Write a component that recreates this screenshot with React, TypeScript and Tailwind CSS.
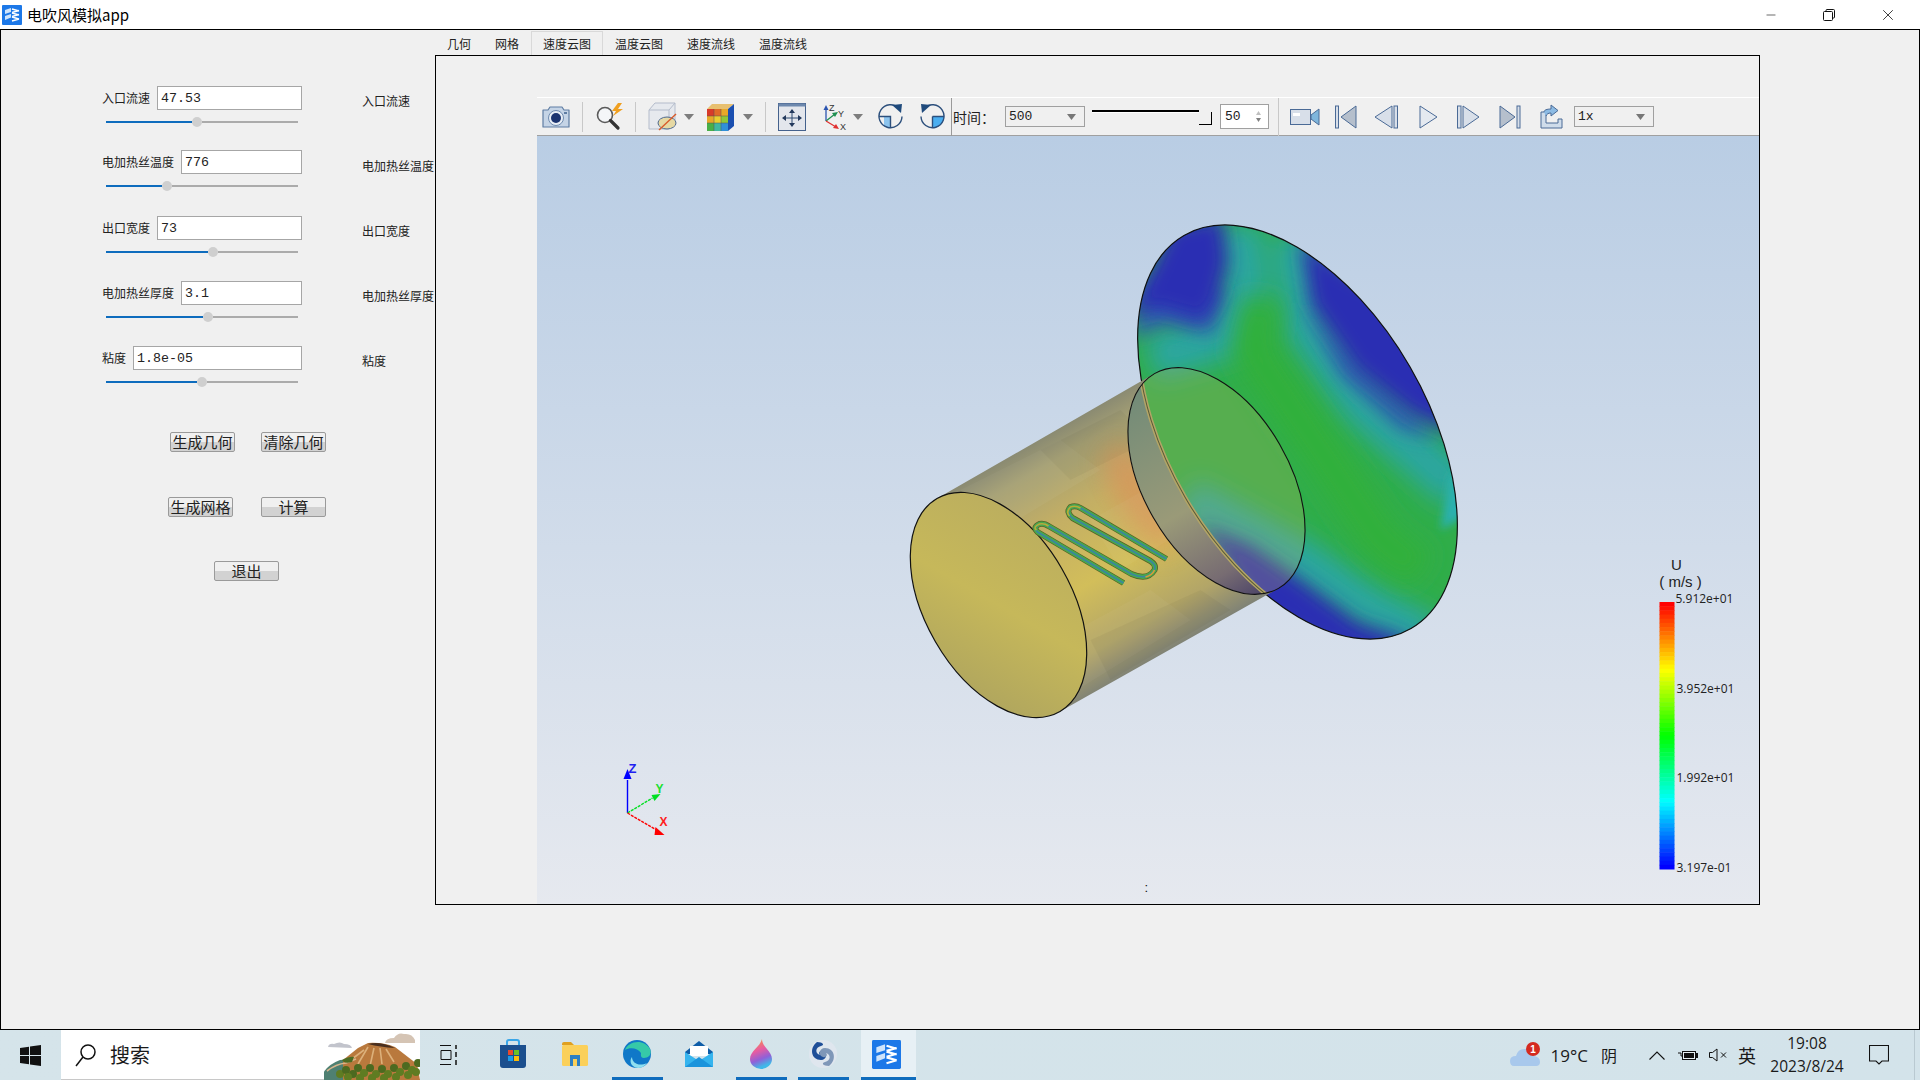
import { X, Minus } from "lucide-react";
import type { ReactNode } from "react";

const rows = [
  { label: "入口流速", value: "47.53", inputW: "w-[145px]", pct: 44.8, top: "mt-[56px]" },
  { label: "电加热丝温度", value: "776", inputW: "w-[121px]", pct: 29.2, top: "mt-[20px]" },
  { label: "出口宽度", value: "73", inputW: "w-[145px]", pct: 53.1, top: "mt-[22px]" },
  { label: "电加热丝厚度", value: "3.1", inputW: "w-[121px]", pct: 50.5, top: "mt-[21px]" },
  { label: "粘度", value: "1.8e-05", inputW: "w-[169px]", pct: 47.4, top: "mt-[21px]" },
];

const sideLabels = ["入口流速", "电加热丝温度", "出口宽度", "电加热丝厚度", "粘度"];
const tabs = ["几何", "网格", "速度云图", "温度云图", "速度流线", "温度流线"];

const wirePath =
  "M1123 583 L1037 532 Q1032 527 1039 524 Q1044 523 1048 526 L1131 574 Q1147 581 1154 570 Q1156 565 1150 561 L1072 518 Q1065 512 1070 507 Q1075 505 1080 508 L1166 559";

function AppLogo({ size }: { size: number }) {
  return (
    <svg width={size} height={size} viewBox="0 0 20 20" className="shrink-0">
      <rect width="20" height="20" rx="1" fill="#1c78e8" />
      <path d="M3 5 L9 3 V7 L3 9Z M3 11 L9 9 V12.5 L3 15Z" fill="#cfe4fb" />
      <path d="M10 4 L17 6 M10 7.5 L17 5.5 M10 8 L17 10 M10 11.5 L17 9.5 M10 12 L17 14 M10 16 L17 14" stroke="#fff" strokeWidth="1.5" />
    </svg>
  );
}

function Slider({ pct }: { pct: number }) {
  return (
    <div className="mt-[4px] ml-[4px] flex h-[16px] w-[192px] items-center">
      <div className="h-[2px] bg-[#0e6cbd]" style={{ width: `${pct}%` }} />
      <div className="h-[10px] w-[10px] shrink-0 rounded-full bg-[#cfcfcf]" />
      <div className="h-[2px] flex-1 bg-[#ababab]" />
    </div>
  );
}

function QtButton({ text }: { text: string }) {
  return (
    <div className="flex h-[20px] w-[65px] items-center justify-center rounded-[2px] border border-[#9a9a9a] bg-gradient-to-b from-[#f0f0f0] from-50% to-[#d2d2d2] to-50% pb-[2px] text-[15px] leading-none text-[#222]">
      {text}
    </div>
  );
}

function DropArrow() {
  return (
    <svg width="10" height="6" viewBox="0 0 10 6" className="shrink-0">
      <path d="M0 0H10L5 6Z" fill="#7d7d7d" />
    </svg>
  );
}

function Sep({ ml }: { ml: string }) {
  return <div className={`h-[30px] w-px shrink-0 bg-[#c8c8c8] ${ml}`} />;
}

function Combo({ text, ml }: { text: string; ml: string }) {
  return (
    <div className={`flex h-[21px] w-[80px] shrink-0 items-center justify-between border border-[#a0a0a0] pl-[3px] pr-[8px] font-['Liberation_Mono',monospace] text-[13px] text-[#222] ${ml}`}>
      <span>{text}</span>
      <svg width="9" height="6" viewBox="0 0 9 6">
        <path d="M0 0H9L4.5 6Z" fill="#777" />
      </svg>
    </div>
  );
}

function Toolbar() {
  const navy = "#4a6a96";
  const pale = "#d8dfe9";
  return (
    <div className="flex h-[39px] shrink-0 items-center border-t border-b border-t-white border-b-[#a0a0a0] bg-[#f0f0f0]">
      {/* camera */}
      <svg width="28" height="25" viewBox="0 0 28 25" className="ml-[5px] shrink-0">
        <path d="M1 6 H6 L8 3 H20 L22 6 H27 V23 H1Z" fill="#c5d4e6" stroke="#5f7da3" strokeWidth="1.2" strokeLinejoin="round" />
        <circle cx="14" cy="14" r="7.5" fill="#e8eef5" stroke="#6f8bb0" />
        <circle cx="14" cy="14" r="5" fill="#1b3470" />
        <rect x="22" y="8" width="3" height="2" fill="#5f7da3" />
      </svg>
      <Sep ml="ml-[12px]" />
      {/* magnifier with bolt */}
      <svg width="29" height="29" viewBox="0 0 29 29" className="ml-[12px] shrink-0">
        <circle cx="10" cy="13" r="7.5" fill="#f4f6f8" stroke="#5a5a5a" strokeWidth="1.6" />
        <path d="M15.5 18.5 L23 26" stroke="#333" strokeWidth="3.2" strokeLinecap="round" />
        <path d="M23 1 L17 9 H21 L18 14 L28 7 H23 L27 1Z" fill="#f0a020" />
      </svg>
      <Sep ml="ml-[11px]" />
      {/* box with clip */}
      <svg width="29" height="29" viewBox="0 0 29 29" className="ml-[12px] shrink-0">
        <path d="M1 8 L7 1 H27 V20 L21 27 H1Z" fill="#e6e9ee" stroke="#b4bccb" />
        <path d="M1 8 H21 V27 M21 8 L27 1" fill="none" stroke="#b4bccb" />
        <ellipse cx="19" cy="21" rx="9" ry="6" fill="#e6d9a4" stroke="#4f6a90" />
        <path d="M11 28 L28 12" stroke="#d85a2a" strokeWidth="1.4" />
      </svg>
      <div className="ml-[7px]"><DropArrow /></div>
      {/* colour cube */}
      <svg width="27" height="28" viewBox="0 0 27 28" className="ml-[13px] shrink-0">
        <path d="M5 1 H27 L21 6 H0Z" fill="#e8c070" />
        <path d="M21 6 L27 1 V23 L21 28Z" fill="#1b4fb0" />
        <rect x="0" y="6" width="7" height="7" fill="#d83a2a" />
        <rect x="7" y="6" width="7" height="7" fill="#e06a28" />
        <rect x="14" y="6" width="7" height="7" fill="#e8a828" />
        <rect x="0" y="13" width="7" height="7" fill="#e8a828" />
        <rect x="7" y="13" width="7" height="7" fill="#e8d030" />
        <rect x="14" y="13" width="7" height="7" fill="#90c838" />
        <rect x="0" y="20" width="7" height="8" fill="#48b048" />
        <rect x="7" y="20" width="7" height="8" fill="#40b8a0" />
        <rect x="14" y="20" width="7" height="8" fill="#3090d8" />
        <path d="M7 6 V28 M14 6 V28 M0 13 H21 M0 20 H21" stroke="#555" strokeWidth="0.5" />
      </svg>
      <div className="ml-[9px]"><DropArrow /></div>
      <Sep ml="ml-[12px]" />
      {/* fit view */}
      <svg width="28" height="28" viewBox="0 0 28 28" className="ml-[12px] shrink-0">
        <rect x="0.5" y="0.5" width="27" height="27" fill="#e3e6ec" stroke="#44618c" />
        <rect x="0.5" y="0.5" width="27" height="3" fill="#6d88ad" />
        <path d="M14 7 V22 M6 15 H22" stroke="#2f4a70" />
        <path d="M14 6 L11 10 H17Z M14 24 L11 20 H17Z M4 15 L8 12 V18Z M24 15 L20 12 V18Z" fill="#23395c" />
      </svg>
      {/* axes */}
      <svg width="24" height="28" viewBox="0 0 24 28" className="ml-[17px] shrink-0">
        <path d="M3 18 V5" stroke="#2c55b0" strokeWidth="1.3" />
        <path d="M3 2 L0.5 7 H5.5Z" fill="#2c55b0" />
        <path d="M3 18 L12 11" stroke="#1f9050" strokeWidth="1.3" />
        <path d="M15 9 L9 10 L12 14Z" fill="#1f9050" />
        <path d="M3 18 L13 24" stroke="#e03030" strokeWidth="1.3" />
        <path d="M16 26 L10 25 L13 21Z" fill="#e03030" />
        <text x="6" y="8" fontSize="9" fontFamily="Liberation Sans" fill="#333">Z</text>
        <text x="15" y="14" fontSize="9" fontFamily="Liberation Sans" fill="#333">Y</text>
        <text x="17" y="27" fontSize="9" fontFamily="Liberation Sans" fill="#333">X</text>
      </svg>
      <div className="ml-[6px]"><DropArrow /></div>
      {/* rotate cw */}
      <svg width="25" height="25" viewBox="0 0 25 25" className="ml-[15px] shrink-0">
        <path d="M12.5 12.5 V24 A11.5 11.5 0 0 1 6 22 L6 12.5Z" fill="#8cc4ee" />
        <path d="M21 4.5 A11.5 11.5 0 1 0 24 12.5 M1 12.5 H12.5 V24" fill="none" stroke="#2c4f7c" strokeWidth="1.4" />
        <path d="M14 1 L24 0 L23 9Z" fill="#1f4a7c" />
      </svg>
      {/* rotate ccw */}
      <svg width="25" height="25" viewBox="0 0 25 25" className="ml-[17px] shrink-0">
        <path d="M12.5 12.5 H24 A11.5 11.5 0 0 1 12.5 24Z" fill="#4aaef0" />
        <path d="M4 4.5 A11.5 11.5 0 1 1 1 12.5 M12.5 12.5 H24 M12.5 12.5 V24" fill="none" stroke="#2c4f7c" strokeWidth="1.4" />
        <path d="M11 1 L1 0 L2 9Z" fill="#1f4a7c" />
      </svg>
      <div className="ml-[6px] h-[38px] w-px shrink-0 bg-[#9a9a9a]" />
      <span className="w-[53px] shrink-0 pl-[1px] text-[14px] leading-none text-[#222]">时间：</span>
      <Combo text="500" ml="" />
      {/* time slider */}
      <div className="ml-[7px] flex h-[18px] w-[120px] shrink-0 items-start">
        <div className="mt-[2px] h-[3px] flex-1 border-t-2 border-b border-t-black border-b-white" />
        <div className="mt-[4px] h-[13px] w-[13px] border-r border-b border-black bg-[#f0f0f0]" />
      </div>
      {/* spin box */}
      <div className="ml-[8px] flex h-[25px] w-[49px] shrink-0 items-center justify-between border border-[#a0a0a0] bg-white pl-[4px] pr-[6px] font-['Liberation_Mono',monospace] text-[13px] text-[#222]">
        <span>50</span>
        <svg width="7" height="13" viewBox="0 0 7 13">
          <path d="M3.5 1 L6 5 H1Z" fill="#c0c0c0" />
          <path d="M3.5 12 L6 8 H1Z" fill="#808080" />
        </svg>
      </div>
      <div className="ml-[9px] h-[38px] w-px shrink-0 bg-[#c8c8c8]" />
      {/* video */}
      <svg width="30" height="20" viewBox="0 0 30 20" className="ml-[11px] shrink-0">
        <rect x="0.5" y="2.5" width="20" height="15" fill={pale} stroke={navy} />
        <rect x="3" y="6" width="7" height="3" fill="#fff" />
        <path d="M21 8 L29 2 V18 L21 12Z" fill="#7fb6dc" stroke={navy} />
      </svg>
      {/* first */}
      <svg width="22" height="24" viewBox="0 0 22 24" className="ml-[15px] shrink-0">
        <rect x="0.5" y="1" width="3" height="22" fill={pale} stroke={navy} />
        <path d="M21 1 V23 L6 12Z" fill="#b5bfcc" stroke={navy} />
      </svg>
      {/* prev */}
      <svg width="24" height="24" viewBox="0 0 24 24" className="ml-[17px] shrink-0">
        <path d="M18 1 V23 L1 12Z" fill={pale} stroke={navy} />
        <rect x="20" y="1" width="3.5" height="22" fill={pale} stroke={navy} />
      </svg>
      {/* play */}
      <svg width="19" height="24" viewBox="0 0 19 24" className="ml-[21px] shrink-0">
        <path d="M1 1 V23 L18 12Z" fill="#e4e9f0" stroke={navy} />
      </svg>
      {/* next */}
      <svg width="23" height="24" viewBox="0 0 23 24" className="ml-[19px] shrink-0">
        <rect x="0.5" y="1" width="3.5" height="22" fill={pale} stroke={navy} />
        <path d="M6 1 V23 L22 12Z" fill={pale} stroke={navy} />
      </svg>
      {/* last */}
      <svg width="22" height="24" viewBox="0 0 22 24" className="ml-[19px] shrink-0">
        <path d="M1 1 V23 L16 12Z" fill="#b5bfcc" stroke={navy} />
        <rect x="18" y="1" width="3" height="22" fill={pale} stroke={navy} />
      </svg>
      {/* export */}
      <svg width="23" height="25" viewBox="0 0 23 25" className="ml-[19px] shrink-0">
        <path d="M1 8 H6 V19 H18 V15 H22 V24 H1Z" fill="#cfdcea" stroke={navy} />
        <path d="M4 8 C4 6 7 5 11 5 V1 L18 6.5 L11 12 V9 C8 9 7 10 6 12" fill="#8cbbe4" stroke={navy} />
      </svg>
      <Combo text="1x" ml="ml-[11px]" />
    </div>
  );
}

function Scene() {
  const flange = { cx: 1297, cy: 432, rx: 227, ry: 130 };
  const bands = Array.from({ length: 64 }, (_, i) => i);
  return (
    <svg viewBox="537 136 1221 768" className="h-full w-full">
      <defs>
        <clipPath id="flangeClip">
          <ellipse cx={flange.cx} cy={flange.cy} rx={flange.rx} ry={flange.ry} transform="rotate(60 1297 432)" />
        </clipPath>
        <clipPath id="rearClip">
          <ellipse cx="1216" cy="481" rx="124" ry="73" transform="rotate(60 1216 481)" />
        </clipPath>
        <clipPath id="bodyClip">
          <path d="M936.5 498.5 L1154 373.6 A124 73 60 0 0 1278 588.4 L1059.5 711.5Z" />
        </clipPath>
        <mask id="crescent" maskUnits="userSpaceOnUse" x="1050" y="300" width="300" height="350">
          <ellipse cx="1216" cy="481" rx="124" ry="73" transform="rotate(60 1216 481)" fill="#fff" />
          <ellipse cx={flange.cx} cy={flange.cy} rx={flange.rx} ry={flange.ry} transform="rotate(60 1297 432)" fill="#000" />
        </mask>
        <filter id="b6" x="-40%" y="-40%" width="180%" height="180%"><feGaussianBlur stdDeviation="9" /></filter>
        <filter id="b12" x="-40%" y="-40%" width="180%" height="180%"><feGaussianBlur stdDeviation="12" /></filter>
        <filter id="b3" x="-20%" y="-20%" width="140%" height="140%"><feGaussianBlur stdDeviation="4" /></filter>
        <linearGradient id="bodyGrad" gradientUnits="userSpaceOnUse" x1="1154" y1="374" x2="1278" y2="588">
          <stop offset="0" stopColor="#8b8b72" />
          <stop offset="0.1" stopColor="#a5a074" />
          <stop offset="0.32" stopColor="#c4af64" />
          <stop offset="0.6" stopColor="#d2be5a" />
          <stop offset="0.85" stopColor="#b2a568" />
          <stop offset="1" stopColor="#7f8276" />
        </linearGradient>
        <linearGradient id="capGrad" gradientUnits="userSpaceOnUse" x1="936" y1="498" x2="1060" y2="712">
          <stop offset="0" stopColor="#b8ab60" />
          <stop offset="0.5" stopColor="#c6b85a" />
          <stop offset="1" stopColor="#a9a05f" />
        </linearGradient>
        <linearGradient id="ringGrad" gradientUnits="userSpaceOnUse" x1="1140" y1="380" x2="1262" y2="595">
          <stop offset="0" stopColor="#6f8a78" />
          <stop offset="0.55" stopColor="#9a9a78" />
          <stop offset="0.85" stopColor="#776c72" />
          <stop offset="1" stopColor="#4c4468" />
        </linearGradient>
      </defs>

      {/* flange face */}
      <g clipPath="url(#flangeClip)">
        <rect x="1050" y="200" width="440" height="470" fill="#30ad4a" />
        <g filter="url(#b12)" fill="none" stroke="#2aa6a0" strokeWidth="46">
          <path d="M1236 226 L1244 280 L1228 335 L1150 358" />
          <path d="M1295 235 L1305 325 L1362 405 L1460 490" />
          <path d="M1185 500 L1300 562 L1360 604 L1430 640" />
        </g>
        <path d="M1262 300 L1252 350 L1320 450 L1380 540 L1420 570" fill="none" stroke="#32b03a" strokeWidth="40" filter="url(#b12)" />
        <path d="M1450 470 L1475 510 L1440 530Z" fill="#2ab0ae" filter="url(#b3)" />
        <g filter="url(#b6)" fill="#2f62ae">
          <path d="M1130 340 L1150 280 L1225 290 L1212 335 L1165 325Z" />
          <path d="M1300 300 L1350 360 L1440 440 L1400 430 L1340 375Z" />
        </g>
        <g filter="url(#b6)" fill="#2b2fb3">
          <path d="M1125 320 L1170 225 L1222 215 L1228 262 L1218 298 L1204 322 L1156 308Z" />
          <path d="M1300 240 L1390 295 L1485 445 L1412 416 L1354 370 L1310 305Z" />
          <path d="M1263 620 L1200 525 L1250 545 L1301 580 L1358 622 L1412 640 L1370 665Z" />
        </g>
        <ellipse cx="1216" cy="481" rx="124" ry="73" transform="rotate(60 1216 481)" fill="#c8b560" opacity="0.25" />
      </g>
      <ellipse cx={flange.cx} cy={flange.cy} rx={flange.rx} ry={flange.ry} transform="rotate(60 1297 432)" fill="none" stroke="#111" strokeWidth="1.2" />

      {/* cylinder wall */}
      <path d="M936.5 498.5 L1154 373.6 A124 73 60 0 0 1278 588.4 L1059.5 711.5Z" fill="url(#bodyGrad)" />
      <g clipPath="url(#bodyClip)">
        <ellipse cx="1140" cy="498" rx="22" ry="60" transform="rotate(-30 1140 498)" fill="#d9935a" opacity="0.7" filter="url(#b12)" />
        <g fill="#fff" opacity="0.035">
          <path d="M960 490 L1060 440 L1100 470 L1000 530Z" />
          <path d="M1090 520 L1180 470 L1200 520 L1120 570Z" />
          <path d="M1020 660 L1150 590 L1190 620 L1060 700Z" />
        </g>
        <g fill="#000" opacity="0.035">
          <path d="M1040 450 L1120 410 L1150 440 L1070 480Z" />
          <path d="M1090 640 L1200 590 L1230 610 L1110 680Z" />
        </g>
      </g>

      {/* neck ring seen through the wall */}
      <rect x="1050" y="300" width="300" height="350" fill="url(#ringGrad)" mask="url(#crescent)" />
      <g clipPath="url(#rearClip)">
        <ellipse cx={flange.cx} cy={flange.cy} rx={flange.rx} ry={flange.ry} transform="rotate(60 1297 432)" fill="none" stroke="#b3a566" strokeWidth="4" />
        <ellipse cx={flange.cx} cy={flange.cy} rx={flange.rx} ry={flange.ry} transform="rotate(60 1297 432)" fill="none" stroke="#5a5a38" strokeWidth="1" />
      </g>
      <ellipse cx="1216" cy="481" rx="124" ry="73" transform="rotate(60 1216 481)" fill="none" stroke="#111" strokeWidth="1.1" />

      {/* inlet cap */}
      <ellipse cx="998" cy="605" rx="123" ry="73" transform="rotate(60 998 605)" fill="url(#capGrad)" stroke="#111" strokeWidth="1.2" />

      {/* heater wire */}
      <g fill="none" strokeLinejoin="round">
        <path d={wirePath} stroke="#56622a" strokeWidth="6" />
        <path d={wirePath} stroke="#4aa84c" strokeWidth="4.4" />
        <path d={wirePath} stroke="#3a86a0" strokeWidth="1.6" />
        <path d="M1036 530 Q1032 527 1039 524 Q1044 523 1048 526" stroke="#b8b030" strokeWidth="1.6" />
        <path d="M1145 577 Q1152 575 1154 570" stroke="#d8a030" strokeWidth="1.6" />
        <path d="M1069 516 Q1065 512 1070 507 Q1075 505 1080 508" stroke="#b8b030" strokeWidth="1.6" />
      </g>

      {/* axes triad */}
      <g>
        <path d="M627 813 V780" stroke="#0000ff" strokeWidth="1.4" />
        <path d="M627 769 L623 779 H631Z" fill="#0000ff" />
        <path d="M627 813 L652 798" stroke="#00e020" strokeWidth="1.4" strokeDasharray="3 1" />
        <path d="M660 794 L651 795 L654 801Z" fill="#00e020" />
        <path d="M627 813 L656 830" stroke="#ff0000" strokeWidth="1.4" strokeDasharray="3 1" />
        <path d="M664 835 L655 827 L654 835Z" fill="#ff0000" />
        <text x="628" y="773" fontSize="13" fontWeight="700" fontFamily="Liberation Sans" fill="#2020f0">Z</text>
        <text x="655" y="793" fontSize="12" fontWeight="700" fontFamily="Liberation Sans" fill="#20e030">Y</text>
        <text x="659" y="826" fontSize="12" fontWeight="700" fontFamily="Liberation Sans" fill="#ff2020">X</text>
      </g>

      {/* colour legend */}
      {bands.map((i) => (
        <rect key={i} x="1659" y={602 + (i * 267) / 64} width="15" height={267 / 64 + 0.5} fill={`hsl(${(i / 63) * 240} 100% 50%)`} />
      ))}
      <g fontFamily="Liberation Sans" fill="#222">
        <text x="1676" y="570" fontSize="15" textAnchor="middle">U</text>
        <text x="1680" y="587" fontSize="15" textAnchor="middle">( m/s )</text>
      </g>
      <g fontFamily="Open Sans" fill="#222">
        <text x="1675" y="603" fontSize="12">5.912e+01</text>
        <text x="1676" y="693" fontSize="12">3.952e+01</text>
        <text x="1676" y="782" fontSize="12">1.992e+01</text>
        <text x="1676" y="872" fontSize="12">3.197e-01</text>
      </g>
      <text x="1144" y="892" fontSize="13" fontFamily="Liberation Sans" fill="#111">:</text>
    </svg>
  );
}

function TaskCell({ running, children }: { running?: boolean; children: ReactNode }) {
  return (
    <div className="flex h-full w-[62px] shrink-0 flex-col items-center">
      <div className="flex flex-1 items-center justify-center">{children}</div>
      <div className={running ? "h-[3px] w-[51px] bg-[#0f6cbd]" : "h-[3px] w-[51px]"} />
    </div>
  );
}

function TaskIcons() {
  return (
    <>
      {/* task view */}
      <svg width="18" height="22" viewBox="0 0 18 22" className="ml-[20px] mr-[24px] shrink-0" fill="none" stroke="#111">
        <path d="M0 1.5 H11 M0 20.5 H11 M1 6.5 H11 V15.5 H1Z" />
        <path d="M16 1 V5 M16 8 V13 M16 16 V21" strokeWidth="1.5" />
      </svg>
      <TaskCell>
        {/* store */}
        <svg width="30" height="30" viewBox="0 0 30 30">
          <path d="M9 6 V3 Q9 1 11 1 H19 Q21 1 21 3 V6" fill="none" stroke="#3aa6e8" strokeWidth="2" />
          <path d="M2 6 H28 V26 Q28 29 25 29 H5 Q2 29 2 26Z" fill="#1b4f8e" />
          <rect x="10" y="11" width="5" height="5" fill="#e8492c" />
          <rect x="16" y="11" width="5" height="5" fill="#6cc024" />
          <rect x="10" y="17" width="5" height="5" fill="#1c9be8" />
          <rect x="16" y="17" width="5" height="5" fill="#fbbc09" />
        </svg>
      </TaskCell>
      <TaskCell>
        {/* folder */}
        <svg width="28" height="26" viewBox="0 0 28 26">
          <path d="M1 3 Q1 1 3 1 H10 L13 4 H1Z" fill="#e0a020" />
          <rect x="1" y="4" width="26" height="21" rx="1.5" fill="#fbd05a" />
          <path d="M9 25 V14 H19 V25 H16 V18 H12 V25Z" fill="#2d7fc4" />
        </svg>
      </TaskCell>
      <TaskCell running>
        {/* edge */}
        <svg width="30" height="30" viewBox="0 0 30 30">
          <circle cx="15" cy="15" r="14" fill="#1078c8" />
          <path d="M3 11 C6 2 22 -1 28 10 C30 15 27 19 22 19 C18 19 19 15 19 14 C16 9 8 8 3 11Z" fill="#36c9a8" />
          <path d="M10 18 C10 24 17 28 25 24 C21 30 14 30 11 27 C8 25 8 20 10 18Z" fill="#8fe0f0" />
        </svg>
      </TaskCell>
      <TaskCell>
        {/* mail */}
        <svg width="30" height="28" viewBox="0 0 30 28">
          <path d="M1 12 L15 1 L29 12 V14 H1Z" fill="#0e5da8" />
          <path d="M6 6 H24 V16 H6Z" fill="#fff" />
          <path d="M1 12 L15 21 L29 12 V27 H1Z" fill="#35b4ee" />
          <path d="M1 27 L15 17 L29 27Z" fill="#1b94dc" />
        </svg>
      </TaskCell>
      <TaskCell running>
        {/* paint drop */}
        <svg width="24" height="30" viewBox="0 0 24 30">
          <defs>
            <linearGradient id="dropG" x1="0" y1="0" x2="0.3" y2="1">
              <stop offset="0" stopColor="#f8a030" />
              <stop offset="0.45" stopColor="#e85ca0" />
              <stop offset="0.75" stopColor="#9060d8" />
              <stop offset="1" stopColor="#40b8e8" />
            </linearGradient>
          </defs>
          <path d="M13 0 C13 8 23 12 23 20 A11 10 0 0 1 1 20 C1 12 11 8 13 0Z" fill="url(#dropG)" />
        </svg>
      </TaskCell>
      <TaskCell running>
        {/* swirl */}
        <svg width="30" height="30" viewBox="0 0 30 30">
          <circle cx="15" cy="15" r="14" fill="#dfe6ee" />
          <path d="M9 3 C1 9 3 21 13 21 C19 21 20 13 15 12 C12 11 10 14 12 16 C7 15 7 8 13 7 C17 6 15 3 9 3Z" fill="#1f4f98" />
          <path d="M21 27 C29 21 27 9 17 9 C11 9 10 17 15 18 C18 19 20 16 18 14 C23 15 23 22 17 23 C13 24 15 27 21 27Z" fill="#7f97b8" />
        </svg>
      </TaskCell>
      {/* active app */}
      <div className="ml-[7px] flex h-full w-[55px] shrink-0 flex-col items-center justify-end bg-[#e7f0f5]">
        <div className="mb-[8px] mr-[4px]"><AppLogo size={29} /></div>
        <div className="h-[3px] w-full bg-[#0f6cbd]" />
      </div>
    </>
  );
}

function Volcano() {
  const trees = [
    [16, 44], [22, 40], [29, 44], [34, 38], [40, 43], [46, 38], [52, 44], [58, 39], [64, 44], [70, 38], [76, 42], [82, 36], [88, 40], [94, 33], [24, 47], [36, 48], [48, 48], [60, 48], [72, 47], [84, 45], [92, 42],
  ];
  return (
    <svg width="96" height="50" viewBox="0 0 96 50" className="shrink-0">
      <path d="M4 17 Q5 13 10 14 Q16 11 20 14 Q27 14 28 18Z" fill="#c2c4cc" />
      <path d="M61 13 Q62 8 70 8 Q74 2 80 4 Q88 3 91 10 V13Z" fill="#d5c4b4" />
      <path d="M-4 50 Q0 36 16 30 L40 28 V50Z" fill="#4f8072" />
      <path d="M19 30 L34 18 L44 13 Q58 12 71 17 L93 34 L96 50 H19Z" fill="#b9793d" />
      <path d="M44 14 Q56 11 71 18 Q56 17 44 14Z" fill="#4a3020" />
      <path d="M44 17 L34 34 M50 18 L46 36 M56 18 L58 34 M62 19 L70 32 M40 20 L24 32" stroke="#dcb07a" strokeWidth="1.6" />
      <path d="M3 41 Q12 34 22 33 L32 29" stroke="#d8b58c" strokeWidth="1.6" fill="none" />
      <path d="M18 30 Q26 26 30 27 L28 32 Q20 34 18 30Z" fill="#4c6c24" />
      {trees.map(([x, y]) => (
        <circle key={`${x}-${y}`} cx={x} cy={y} r="4" fill={x % 4 === 0 ? "#5f7c22" : "#4c6a20"} />
      ))}
    </svg>
  );
}

function Taskbar() {
  return (
    <div className="flex h-[50px] shrink-0 items-center bg-gradient-to-r from-[#d5e4ea] to-[#d3e3ea] text-[#1a1a1a]">
      {/* start */}
      <svg width="21" height="21" viewBox="0 0 21 21" className="ml-[20px] shrink-0">
        <path d="M0 3 L9 1.7 V10 H0Z M10 1.5 L21 0 V10 H10Z M0 11 H9 V19.3 L0 18Z M10 11 H21 V21 L10 19.5Z" fill="#111" />
      </svg>
      {/* search box */}
      <div className="ml-[20px] flex h-full w-[359px] shrink-0 items-center justify-between border-b border-[#c8c8c8] bg-white">
        <div className="flex items-center">
          <svg width="22" height="24" viewBox="0 0 22 24" className="ml-[14px]" fill="none" stroke="#111" strokeWidth="1.5">
            <circle cx="13" cy="9" r="7" />
            <path d="M8 14 L1 23" />
          </svg>
          <span className="ml-[13px] text-[20px] leading-none">搜索</span>
        </div>
        <Volcano />
      </div>
      <div className="flex h-full items-center">
        <TaskIcons />
      </div>
      <div className="flex-1" />
      {/* tray */}
      <svg width="30" height="26" viewBox="0 0 30 26" className="shrink-0">
        <path d="M4 24 Q0 24 0 19 Q0 14 6 14 Q8 6 16 7 Q24 8 24 14 Q30 15 30 20 Q30 24 26 24Z" fill="#a8c8ec" />
        <circle cx="23" cy="7" r="7" fill="#d42a20" />
        <text x="23" y="10.5" fontSize="10" textAnchor="middle" fontFamily="Liberation Sans" fontWeight="700" fill="#fff">1</text>
      </svg>
      <span className="ml-[11px] font-['Open_Sans',sans-serif] text-[17px] leading-none">19°C</span>
      <span className="ml-[13px] text-[16px] leading-none">阴</span>
      <svg width="16" height="9" viewBox="0 0 16 9" className="ml-[32px] shrink-0" fill="none" stroke="#111" strokeWidth="1.1">
        <path d="M0.5 8.5 L8 1 L15.5 8.5" />
      </svg>
      <svg width="20" height="12" viewBox="0 0 20 12" className="ml-[13px] shrink-0">
        <path d="M0 4 H3 M3 4 V7 H4" stroke="#111" fill="none" />
        <rect x="4.5" y="2.5" width="13" height="8" fill="#e8f0f4" stroke="#111" />
        <rect x="6" y="4" width="10" height="5" fill="#111" />
        <rect x="18" y="4" width="2" height="5" fill="#111" />
      </svg>
      <svg width="18" height="14" viewBox="0 0 18 14" className="ml-[11px] shrink-0" fill="none" stroke="#111">
        <path d="M0.5 4.5 H3.5 L8 1 V13 L3.5 9.5 H0.5Z" />
        <path d="M12 4.5 L17 9.5 M17 4.5 L12 9.5" />
      </svg>
      <span className="ml-[11px] text-[18px] leading-none">英</span>
      <div className="ml-[13px] flex w-[76px] shrink-0 flex-col items-center whitespace-nowrap font-['Open_Sans',sans-serif] text-[15.5px] leading-[23px]">
        <span>19:08</span>
        <span>2023/8/24</span>
      </div>
      <svg width="20" height="20" viewBox="0 0 20 20" className="ml-[24px] shrink-0" fill="none" stroke="#111" strokeWidth="1.1">
        <path d="M0.5 0.5 H19.5 V16 H13 L10 19 L7 16 H0.5Z" />
      </svg>
      <div className="ml-[25px] h-full w-px bg-[#b9c9d1]" />
      <div className="w-[5px]" />
    </div>
  );
}

export default function App() {
  return (
    <div className="flex h-screen w-[1920px] flex-col overflow-hidden bg-white font-['Noto_Sans_CJK_SC',sans-serif]">
      {/* title bar */}
      <div className="flex h-[29px] shrink-0 items-center pl-[2px]">
        <AppLogo size={20} />
        <span className="ml-[5px] text-[15px] leading-none text-black">电吹风模拟app</span>
        <div className="ml-auto flex items-center">
          <Minus size={14} strokeWidth={1} className="text-black" />
          <svg width="12" height="12" viewBox="0 0 12 12" className="ml-[45px]" fill="none" stroke="#111">
            <rect x="0.5" y="2.5" width="9" height="9" rx="1" />
            <path d="M3 2.5 V1.5 Q3 0.5 4 0.5 H10.5 Q11.5 0.5 11.5 1.5 V8 Q11.5 9 10.5 9 H9.5" />
          </svg>
          <X size={18} strokeWidth={1} className="ml-[44px] mr-[23px] text-black" />
        </div>
      </div>

      {/* main window */}
      <div className="flex h-[1001px] shrink-0 border border-black bg-[#f0f0f0]">
        <div className="flex w-[434px] shrink-0">
          {/* parameters */}
          <div className="w-[361px] shrink-0 pl-[101px] text-[12px] leading-none text-[#222]">
            {rows.map((r) => (
              <div key={r.label} className={r.top}>
                <div className="flex h-[24px] w-[200px] items-center justify-between">
                  <span className="whitespace-nowrap pb-[1px]">{r.label}</span>
                  <div className={`flex h-[24px] items-center border border-[#a6a6a6] bg-white pl-[3px] pt-[2px] font-['Liberation_Mono',monospace] text-[13.3px] ${r.inputW}`}>
                    {r.value}
                  </div>
                </div>
                <Slider pct={r.pct} />
              </div>
            ))}
            <div className="mt-[42px] ml-[68px] flex gap-[26px]">
              <QtButton text="生成几何" />
              <QtButton text="清除几何" />
            </div>
            <div className="mt-[45px] ml-[66px] flex gap-[28px]">
              <QtButton text="生成网格" />
              <QtButton text="计算" />
            </div>
            <div className="mt-[44px] ml-[112px]">
              <QtButton text="退出" />
            </div>
          </div>
          {/* echo labels */}
          <div className="flex flex-col pt-[38px] text-[12px] leading-none text-[#222]">
            {sideLabels.map((l) => (
              <div key={l} className="flex h-[65px] items-center whitespace-nowrap">{l}</div>
            ))}
          </div>
        </div>

        {/* tabs and view */}
        <div className="flex w-[1325px] shrink-0 flex-col pt-px">
          <div className="flex h-[24px] shrink-0 text-[12px] leading-none text-[#222]">
            {tabs.map((t) => (
              <div
                key={t}
                className={t === "速度云图" ? "flex items-center border border-b-0 border-[#d9d9d9] px-[11px] pt-[1px]" : "flex items-center px-[12px] pt-[1px]"}
              >
                {t}
              </div>
            ))}
          </div>
          <div className="flex h-[850px] shrink-0 flex-col border border-black pt-[41px] pl-[101px]">
            <Toolbar />
            <div className="min-h-0 flex-1 bg-gradient-to-b from-[#b9cde4] to-[#e6e9ef]">
              <Scene />
            </div>
          </div>
        </div>
      </div>

      <Taskbar />
    </div>
  );
}
